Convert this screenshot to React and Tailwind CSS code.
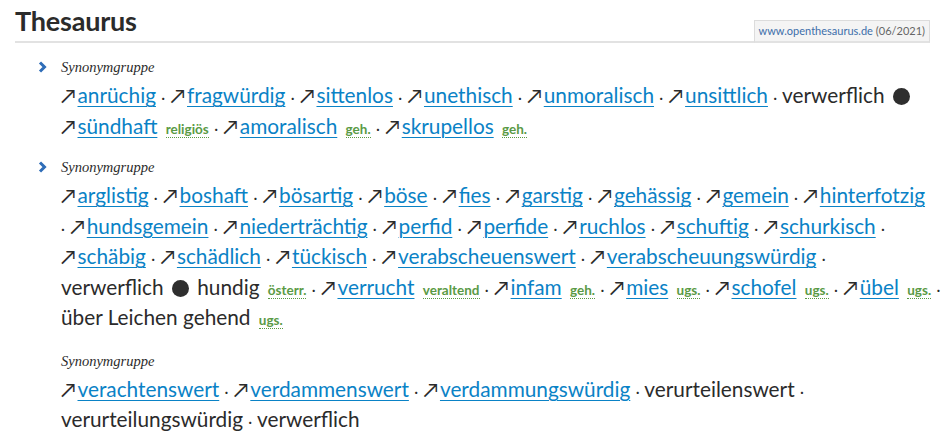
import React from 'react';

const groups = [
  {
    chevron: true,
    gap: 'mt-0',
    lines: [
      '^anrüchig|·|^fragwürdig|·|^sittenlos|·|^unethisch|·|^unmoralisch|·|^unsittlich|·|verwerflich|●',
      '^sündhaft|[religiös|·|^amoralisch|[geh.|·|^skrupellos|[geh.',
    ],
  },
  {
    chevron: true,
    gap: 'mt-[13px]',
    lines: [
      '^arglistig|·|^boshaft|·|^bösartig|·|^böse|·|^fies|·|^garstig|·|^gehässig|·|^gemein|·|^hinterfotzig',
      '·|^hundsgemein|·|^niederträchtig|·|^perfid|·|^perfide|·|^ruchlos|·|^schuftig|·|^schurkisch|·',
      '^schäbig|·|^schädlich|·|^tückisch|·|^verabscheuenswert|·|^verabscheuungswürdig|·',
      'verwerflich|●|hundig|[österr.|·|^verrucht|[veraltend|·|^infam|[geh.|·|^mies|[ugs.|·|^schofel|[ugs.|·|^übel|[ugs.|·',
      'über Leichen gehend|[ugs.',
    ],
  },
  {
    chevron: false,
    gap: 'mt-[15px]',
    lines: [
      '^verachtenswert|·|^verdammenswert|·|^verdammungswürdig|·|verurteilenswert|·',
      'verurteilungswürdig|·|verwerflich',
    ],
  },
];

// one token of a synonym line
const Token = ({ t }) => {
  if (t.startsWith('^')) {
    return (
      <span className="whitespace-nowrap">
        <span className="text-[#2b2b2b] text-[20px] pr-[1.5px]">↗</span>
        <a href="#" className="text-[#0a82c6] underline decoration-[#0a82c6] underline-offset-[3px] decoration-1">
          {t.slice(1)}
        </a>
      </span>
    );
  }
  if (t.startsWith('[')) {
    return (
      <span className="ml-[3px] inline-block text-[13.5px] leading-[15px] font-bold text-[#5a9a45] border-b border-dotted border-[#5a9a45]">
        {t.slice(1)}
      </span>
    );
  }
  if (t === '●') {
    return <span className="mx-[3px] inline-block w-[17px] h-[17px] rounded-full bg-[#2e2e2e] align-[-2px]"></span>;
  }
  if (t === '·') return <span className="text-[15px]">·</span>;
  return <span>{t}</span>;
};

const Line = ({ text }) => {
  const tokens = text.split('|');
  return (
    <div className="whitespace-nowrap h-[30.5px]">
      {tokens.map((t, i) => (
        <React.Fragment key={i}>
          {i > 0 && ' '}
          <Token t={t} />
        </React.Fragment>
      ))}
    </div>
  );
};

const Chevron = () => (
  <svg width="9" height="12" viewBox="0 0 9 12" className="mt-[7px]">
    <path d="M2 1.5 L6.5 6 L2 10.5" fill="none" stroke="#2f6db8" strokeWidth="3" />
  </svg>
);

export default function App() {
  return (
    <div className="w-[949px] h-[444px] bg-white text-[#2b2b2b] overflow-hidden" style={{ fontFamily: 'Lato, "Noto Sans", sans-serif' }}>
      <div className="mx-[15px] w-[915px] flex items-end justify-between border-b-2 border-[#e2e2e2]">
        <h1 className="text-[27px] leading-[34px] font-bold text-[#2b2b2b] pt-[4px] pb-[3px] tracking-[-0.2px]">Thesaurus</h1>
        <div className="mb-[-2px] border border-b-2 border-[#dcdcdc] border-b-[#e2e2e2] bg-[#f4f4f4] px-[4px] h-[23px] flex items-center text-[11px]">
          <span className="text-[#3d6eaa]">www.openthesaurus.de</span>
          <span className="text-[#666] ml-[3px]">(06/2021)</span>
        </div>
      </div>

      <div className="pl-[38px] pt-[11px] flex flex-col">
        {groups.map((g, gi) => (
          <div key={gi} className={`flex ${g.gap}`}>
            <div className="w-[23px] shrink-0">{g.chevron && <Chevron />}</div>
            <div>
              <div className="italic text-[14.5px] leading-[26px] text-[#2b2b2b]" style={{ fontFamily: '"Liberation Serif", serif' }}>
                Synonymgruppe
              </div>
              <div className="text-[20.8px] leading-[30.5px]">
                {g.lines.map((l, li) => (
                  <Line key={li} text={l} />
                ))}
              </div>
            </div>
          </div>
        ))}
      </div>
    </div>
  );
}
